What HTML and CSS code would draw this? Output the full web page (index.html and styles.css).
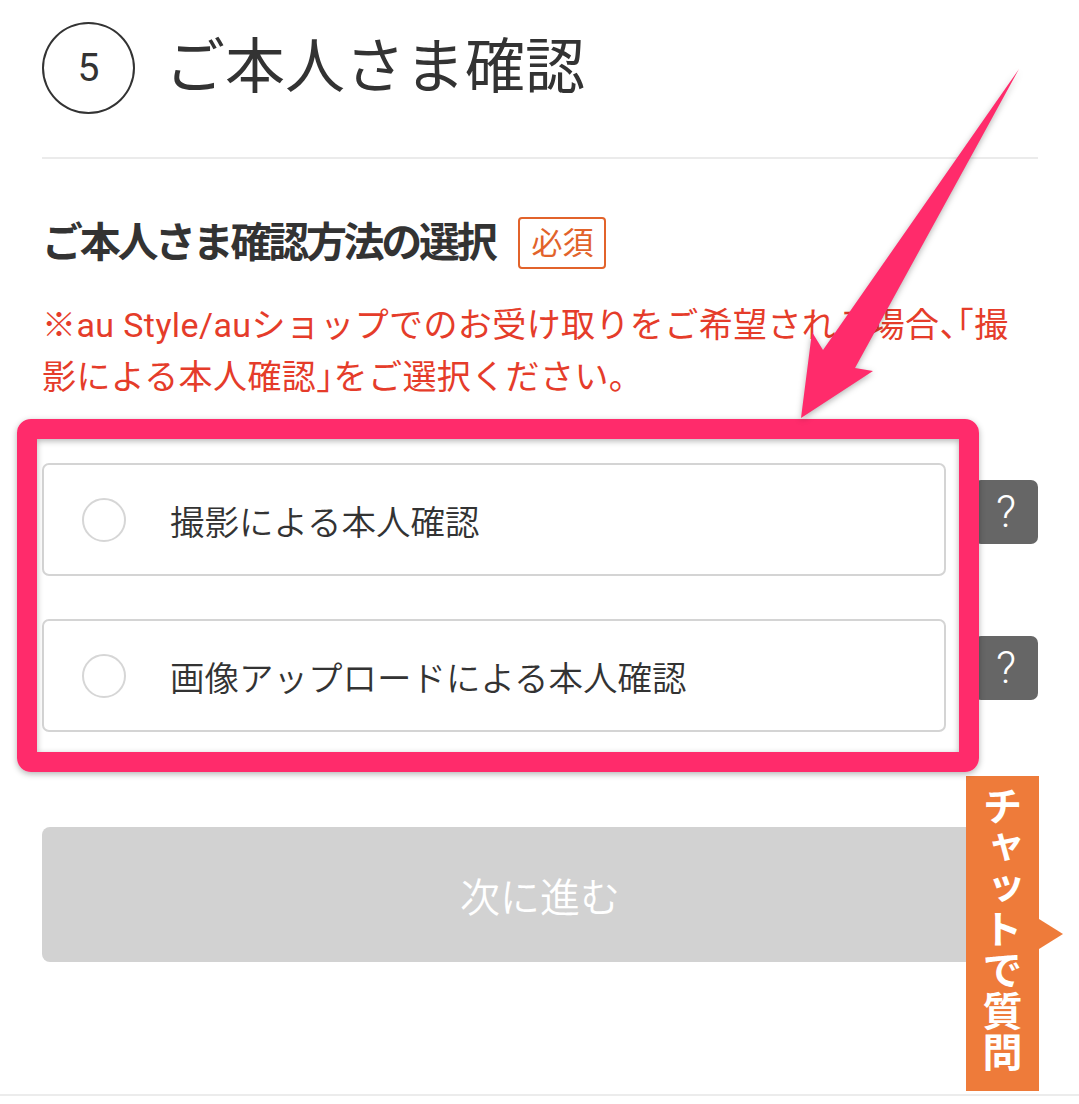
FILE: index.html
```html
<!DOCTYPE html>
<html lang="ja">
<head>
<meta charset="utf-8">
<title>ご本人さま確認</title>
<link rel="stylesheet" href="styles.css">
</head>
<body>
<main class="page">
  <header class="step-head">
    <span class="step-num">5</span>
    <h1 class="step-title">ご本人さま確認</h1>
  </header>
  <hr class="divider">
  <div class="field-head">
    <h2 class="field-title">ご本人さま確認方法の選択</h2>
    <span class="req">必須</span>
  </div>
  <p class="note">※au Style/auショップでのお受け取りをご希望される場合<span class="punct">、「</span>撮<br>影による本人確認<span class="punct">」</span>をご選択ください。</p>
  <div class="options">
    <div class="option-row">
      <label class="option"><span class="radio"></span><span class="option-text">撮影による本人確認</span></label>
      <button class="help" type="button">?</button>
    </div>
    <div class="option-row">
      <label class="option"><span class="radio"></span><span class="option-text">画像アップロードによる本人確認</span></label>
      <button class="help" type="button">?</button>
    </div>
  </div>
  <div class="actions">
    <button class="next" type="button" disabled>次に進む</button>
  </div>
</main>
<footer class="page-foot"></footer>

<div class="chat-tab"><span class="chat-text">チャットで質問</span></div>

<div class="annot-box"></div>
<svg class="annot-arrow" width="1079" height="1104" viewBox="0 0 1079 1104">
  <polygon points="1019,69 855,368 873,371 801,418 812,332 823,350" fill="#ff2b6b"/>
</svg>
</body>
</html>
```
FILE: styles.css
```css
html, body {
  margin: 0;
  padding: 0;
}
body {
  background: #fff;
  color: #333;
  font-family: Roboto, "Noto Sans CJK JP", sans-serif;
  position: relative;
  width: 1079px;
  min-height: 1104px;
  overflow: hidden;
}
.page {
  padding: 22px 41px 0 42px;
}
.step-head {
  display: flex;
  align-items: center;
  gap: 30px;
  height: 92px;
}
.step-num {
  width: 93px;
  height: 92px;
  box-sizing: border-box;
  border: 2px solid #333;
  border-radius: 50%;
  display: flex;
  align-items: center;
  justify-content: center;
  font-size: 39px;
  line-height: 1;
}
.step-title {
  margin: 0;
  font-size: 60px;
  font-weight: 400;
  line-height: 1;
  color: #333;
}
.divider {
  border: 0;
  border-top: 2px solid #ebebeb;
  margin: 43px 0 0;
  height: 0;
}
.field-head {
  display: flex;
  align-items: center;
  gap: 24px;
  margin-top: 58px;
  height: 52px;
}
.field-title {
  margin: 0;
  font-size: 41px;
  font-weight: 700;
  line-height: 1;
  letter-spacing: -3.3px;
  color: #333;
}
.req {
  box-sizing: border-box;
  height: 52px;
  display: flex;
  align-items: center;
  padding: 0 11px;
  border: 2px solid #e2632b;
  border-radius: 4px;
  color: #e2632b;
  font-size: 31px;
  line-height: 1;
}
.note {
  margin: 30px 0 0;
  font-size: 34px;
  line-height: 52px;
  letter-spacing: 0.4px;
  color: #e53c2a;
}
.punct {
  font-feature-settings: "halt";
}
.options {
  margin-top: 60px;
  display: flex;
  flex-direction: column;
  gap: 43px;
}
.option-row {
  display: flex;
  align-items: flex-start;
  gap: 28px;
}
.option {
  flex: 1;
  height: 113px;
  box-sizing: border-box;
  border: 2px solid #d4d4d4;
  border-radius: 7px;
  background: #fff;
  display: flex;
  align-items: center;
  padding-left: 38px;
  gap: 44px;
  font-size: 34.5px;
  font-weight: 350;
  color: #333;
}
.radio {
  width: 44px;
  height: 44px;
  box-sizing: border-box;
  border: 2px solid #d6d6d6;
  border-radius: 50%;
  flex: none;
}
.help {
  width: 64px;
  height: 64px;
  margin-top: 17px;
  flex: none;
  background: #666;
  color: #fff;
  border: 0;
  border-radius: 7px;
  font-family: Roboto, sans-serif;
  font-weight: 300;
  font-size: 44px;
  line-height: 1;
  padding: 0;
}
.actions {
  margin-top: 95px;
}
.next {
  display: block;
  width: 100%;
  height: 135px;
  background: #d2d2d2;
  color: #fff;
  border: 0;
  border-radius: 8px;
  font-family: Roboto, "Noto Sans CJK JP", sans-serif;
  font-size: 40px;
  font-weight: 350;
  padding: 0;
}
.page-foot {
  margin-top: 132px;
  border-top: 2px solid #ececec;
  height: 8px;
}
.chat-tab {
  position: absolute;
  left: 966px;
  top: 776px;
  width: 73px;
  height: 315px;
  background: #ee7b3a;
  color: #fff;
  display: flex;
  justify-content: center;
  box-sizing: border-box;
  padding-top: 10px;
}
.chat-tab::after {
  content: "";
  position: absolute;
  left: 100%;
  top: 143px;
  border-left: 24px solid #ee7b3a;
  border-top: 15px solid transparent;
  border-bottom: 15px solid transparent;
}
.chat-text {
  writing-mode: vertical-rl;
  font-family: "Noto Sans CJK JP", sans-serif;
  font-weight: 700;
  font-size: 40px;
  line-height: 1;
  letter-spacing: 1px;
}
.annot-box {
  position: absolute;
  left: 17px;
  top: 419px;
  width: 962px;
  height: 353px;
  box-sizing: border-box;
  border: 20px solid #ff2b6b;
  border-radius: 14px;
  box-shadow: 0 2px 6px rgba(0, 0, 0, 0.3), inset 0 2px 6px rgba(0, 0, 0, 0.3);
  pointer-events: none;
}
.annot-arrow {
  position: absolute;
  left: 0;
  top: 0;
  pointer-events: none;
  filter: drop-shadow(0 2px 3px rgba(0, 0, 0, 0.3));
}
```
